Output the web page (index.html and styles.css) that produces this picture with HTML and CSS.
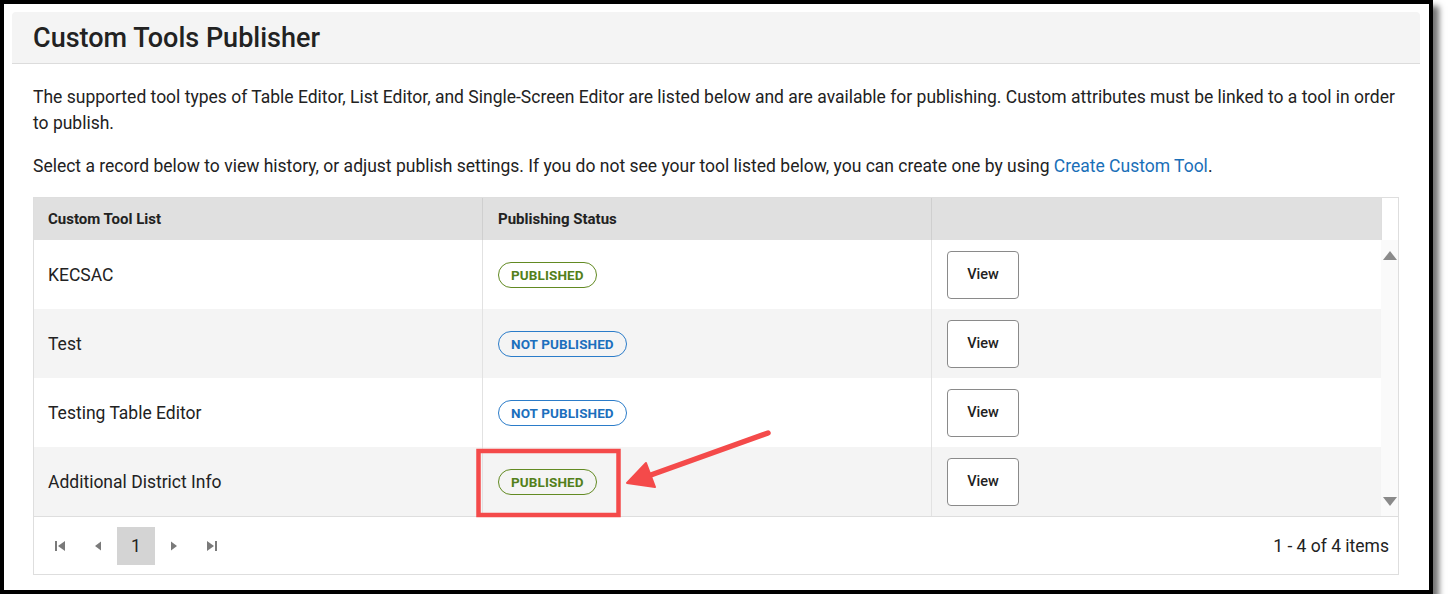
FILE: index.html
```html
<!DOCTYPE html>
<html lang="en">
<head>
<meta charset="utf-8">
<title>Custom Tools Publisher</title>
<link rel="stylesheet" href="styles.css">
</head>
<body>
<div class="frame">
  <div class="panel-head">
    <h1 class="title">Custom Tools Publisher</h1>
  </div>
  <div class="content">
    <p class="intro">The supported tool types of Table Editor, List Editor, and Single-Screen Editor are listed below and are available for publishing. Custom attributes must be linked to a tool in order to publish.</p>
    <p class="intro second">Select a record below to view history, or adjust publish settings. If you do not see your tool listed below, you can create one by using <a class="link" href="#">Create Custom Tool</a>.</p>

    <div class="grid">
      <div class="grid-head">
        <div class="hcell">Custom Tool List</div>
        <div class="hcell">Publishing Status</div>
        <div class="hcell"></div>
        <div class="hscroll"></div>
      </div>
      <div class="grid-body">
        <div class="rows">
          <div class="row">
            <div class="cell">KECSAC</div>
            <div class="cell"><span class="badge pub">PUBLISHED</span></div>
            <div class="cell"><button class="view">View</button></div>
          </div>
          <div class="row alt">
            <div class="cell">Test</div>
            <div class="cell"><span class="badge notpub">NOT PUBLISHED</span></div>
            <div class="cell"><button class="view">View</button></div>
          </div>
          <div class="row">
            <div class="cell">Testing Table Editor</div>
            <div class="cell"><span class="badge notpub">NOT PUBLISHED</span></div>
            <div class="cell"><button class="view">View</button></div>
          </div>
          <div class="row alt">
            <div class="cell">Additional District Info</div>
            <div class="cell"><span class="badge pub">PUBLISHED</span></div>
            <div class="cell"><button class="view">View</button></div>
          </div>
        </div>
        <div class="scrollbar">
          <svg class="sarrow" width="14" height="9" viewBox="0 0 14 9"><polygon points="7,0 14,9 0,9" fill="#8a8a8a"/></svg>
          <svg class="sarrow" width="14" height="9" viewBox="0 0 14 9"><polygon points="0,0 14,0 7,9" fill="#8a8a8a"/></svg>
        </div>
      </div>
      <div class="pager">
        <div class="pnav">
          <span class="pbtn"><svg width="12" height="12" viewBox="0 0 12 12"><rect x="1" y="1" width="2" height="10" fill="#7a7a7a"/><polygon points="11,1 11,11 4,6" fill="#7a7a7a"/></svg></span>
          <span class="pbtn"><svg width="12" height="12" viewBox="0 0 12 12"><polygon points="9,1.5 9,10.5 3,6" fill="#7a7a7a"/></svg></span>
          <span class="pbtn page">1</span>
          <span class="pbtn"><svg width="12" height="12" viewBox="0 0 12 12"><polygon points="3,1.5 3,10.5 9,6" fill="#7a7a7a"/></svg></span>
          <span class="pbtn"><svg width="12" height="12" viewBox="0 0 12 12"><polygon points="1,1 1,11 8,6" fill="#7a7a7a"/><rect x="9" y="1" width="2" height="10" fill="#7a7a7a"/></svg></span>
        </div>
        <div class="pinfo">1 - 4 of 4 items</div>
      </div>
    </div>
  </div>
  <svg class="annot" width="1449" height="609" viewBox="0 0 1449 609">
    <rect x="478.5" y="451" width="140" height="64" fill="none" stroke="#f44a4a" stroke-width="4.5"/>
    <line x1="768" y1="433" x2="648" y2="476" stroke="#f44a4a" stroke-width="5.5" stroke-linecap="round"/>
    <polygon points="627,483 646,463 655,487" fill="#f44a4a" stroke="#f44a4a" stroke-width="2" stroke-linejoin="round"/>
  </svg>
</div>
</body>
</html>
```
FILE: styles.css
```css
* { box-sizing: border-box; }
html, body { margin: 0; padding: 0; background: #fff; }
body { font-family: Roboto, "Liberation Sans", Arial, sans-serif; color: #222; }

.frame {
  position: relative;
  width: 1433px;
  height: 594px;
  border: 4px solid #000;
  padding: 8px 9px 0 8px;
  background: #fff;
  box-shadow: 6px 6px 6px rgba(0,0,0,0.55);
}

.panel-head {
  background: #f4f4f4;
  border-bottom: 1px solid #dcdcdc;
  border-radius: 4px 4px 0 0;
  height: 52px;
  padding-left: 21px;
  display: flex;
  align-items: center;
}
.title {
  margin: 0;
  font-size: 27px;
  font-weight: 500;
  color: #222;
}

.content { padding: 0 21px; }

.intro {
  margin: 20px 0 0;
  font-size: 17.5px;
  line-height: 26px;
  color: #222;
}
.intro.second { margin-top: 17px; }
.link { color: #1a6fb8; text-decoration: none; }

.grid {
  margin-top: 18px;
  border: 1px solid #dedede;
  width: 1366px;
}
.grid-head {
  display: grid;
  grid-template-columns: 448px 449px 450px 17px;
  height: 42px;
}
.hcell {
  background: #e0e0e0;
  font-size: 15px;
  font-weight: 700;
  color: #222;
  padding-left: 14px;
  display: flex;
  align-items: center;
  border-left: 1px solid #cfcfcf;
}
.hcell:first-child { border-left: none; }
.hcell:nth-child(2) { padding-left: 15px; }
.hscroll { background: #fff; border-left: 1px solid #dedede; }

.grid-body {
  display: flex;
  border-bottom: 1px solid #dedede;
}
.rows { width: 1347px; }
.row {
  display: grid;
  grid-template-columns: 448px 449px 450px;
  height: 69px;
  background: #fff;
}
.row.alt { background: #f4f4f4; }
.cell {
  display: flex;
  align-items: center;
  padding-left: 15px;
  font-size: 17.5px;
  color: #222;
  border-left: 1px solid #e2e2e2;
}
.cell:first-child { border-left: none; padding-left: 14px; }

.badge {
  display: inline-flex;
  align-items: center;
  height: 26px;
  padding: 0 12px;
  border-radius: 13px;
  font-size: 13.5px;
  font-weight: 700;
  letter-spacing: 0.1px;
  background: transparent;
}
.badge.pub { color: #53801a; border: 1px solid #628a22; }
.badge.notpub { color: #1c6fbd; border: 1px solid #2b7cc9; }

.view {
  width: 72px;
  height: 48px;
  background: #fff;
  border: 1px solid #8a8a8a;
  border-radius: 4px;
  font-family: Roboto, "Liberation Sans", Arial, sans-serif;
  font-size: 14.5px;
  font-weight: 500;
  color: #222;
  cursor: pointer;
}

.scrollbar {
  width: 17px;
  background: #fafafa;
  display: flex;
  flex-direction: column;
  justify-content: space-between;
  align-items: center;
  padding: 11px 0 10px;
}
.sarrow { display: block; }

.pager {
  height: 57px;
  display: flex;
  align-items: center;
  justify-content: space-between;
  padding: 0 9px 0 7px;
}
.pnav { display: flex; align-items: center; }
.pbtn {
  width: 38px;
  height: 38px;
  display: flex;
  align-items: center;
  justify-content: center;
}
.pbtn.page {
  background: #d4d4d4;
  font-size: 17.5px;
  color: #222;
}
.pinfo { font-size: 17.5px; color: #222; }

.annot {
  position: absolute;
  left: -4px;
  top: -4px;
  pointer-events: none;
}
```
